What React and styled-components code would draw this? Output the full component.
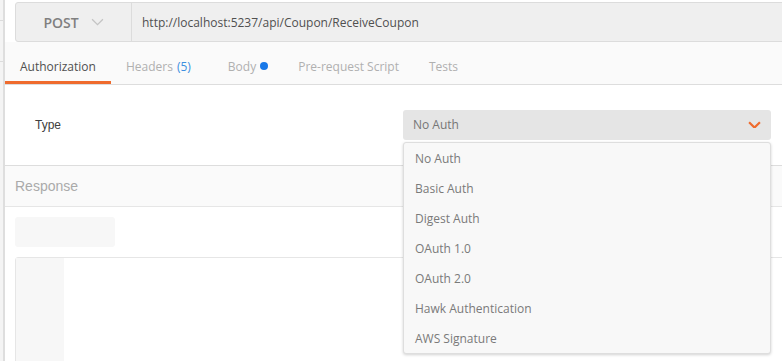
import React from "react";
import styled, { createGlobalStyle } from "styled-components";

const GlobalStyle = createGlobalStyle`
  html, body {
    margin: 0;
    padding: 0;
    background: #ffffff;
    overflow: hidden;
  }
  body {
    font-family: "Open Sans", "Liberation Sans", sans-serif;
    font-size: 12px;
    color: #505050;
  }
`;

const Shell = styled.div`
  display: flex;
  width: 782px;
  height: 361px;
  overflow: hidden;
`;

const Sidebar = styled.div`
  width: 3px;
  flex: none;
  background: #f4f4f4;
  border-right: 2px solid #dedede;
  display: flex;
  flex-direction: column;
`;

const SidebarRow = styled.div`
  height: ${p => p.h}px;
  flex: none;
  border-bottom: 1px solid #dcdcdc;
`;

const Main = styled.div`
  flex: 1;
  min-width: 0;
  display: flex;
  flex-direction: column;
  position: relative;
  & > * {
    flex-shrink: 0;
  }
`;

const UrlBar = styled.div`
  display: flex;
  height: 38px;
  margin: 2px -20px 0 10px;
  background: #efefef;
  border: 1px solid #dcdcdc;
  border-radius: 3px;
`;

const Method = styled.div`
  width: 115px;
  flex: none;
  display: flex;
  align-items: center;
  justify-content: center;
  gap: 12px;
  border-right: 1px solid #dcdcdc;
  color: #808080;
  font-size: 14px;
  font-weight: 600;
`;

const Url = styled.div`
  flex: 1;
  display: flex;
  align-items: center;
  padding-left: 10px;
  color: #505050;
  font-size: 12px;
`;

const Tabs = styled.div`
  display: flex;
  align-items: stretch;
  height: 42px;
  background: #fafafa;
  border-bottom: 1px solid #dddddd;
`;

const Tab = styled.div`
  display: flex;
  align-items: center;
  padding: 9px 15px 0;
  margin-right: ${p => p.gap || 0}px;
  font-size: 12px;
  color: ${p => (p.active ? "#505050" : "#b0b0b0")};
  border-bottom: 3px solid ${p => (p.active ? "#ef6b2d" : "transparent")};
`;

const Count = styled.span`
  color: #3d8fe0;
  margin-left: 4px;
`;

const Dot = styled.span`
  width: 8px;
  height: 8px;
  border-radius: 50%;
  background: #1878e8;
  margin-left: 4px;
`;

const TypeRow = styled.div`
  display: flex;
  align-items: center;
  justify-content: space-between;
  height: 80px;
  padding: 0 11px 0 30px;
  border-bottom: 1px solid #dddddd;
`;

const Label = styled.div`
  font-family: "Liberation Sans", Arial, sans-serif;
  font-size: 12px;
  color: #404040;
`;

const Select = styled.div`
  width: 368px;
  height: 30px;
  box-sizing: border-box;
  display: flex;
  align-items: center;
  justify-content: space-between;
  padding: 0 10px;
  background: #e5e5e5;
  border-radius: 3px;
  color: #767676;
  margin-top: -1px;
`;

const ResponseHead = styled.div`
  height: 40px;
  display: flex;
  align-items: center;
  padding-left: 10px;
  background: #fafafa;
  border-bottom: 1px solid #e6e6e6;
  font-family: "Liberation Sans", Arial, sans-serif;
  font-size: 14px;
  color: #aaaaaa;
`;

const ResponseBody = styled.div`
  padding: 10px 0 0 10px;
  display: flex;
  flex-direction: column;
  gap: 10px;
`;

const Placeholder = styled.div`
  width: 100px;
  height: 30px;
  background: #f7f7f7;
  border-radius: 3px;
`;

const Editor = styled.div`
  height: 120px;
  margin-right: -10px;
  border: 1px solid #e6e6e6;
  border-radius: 3px;
  display: flex;
`;

const Gutter = styled.div`
  width: 48px;
  background: #f7f7f7;
`;

const Menu = styled.ul`
  position: absolute;
  top: 142px;
  left: 398px;
  width: 368px;
  box-sizing: border-box;
  margin: 0;
  padding: 0;
  list-style: none;
  background: #f8f8f8;
  border: 1px solid #dedede;
  border-radius: 3px;
  box-shadow: 0 1px 3px rgba(0, 0, 0, 0.18);
`;

const MenuItem = styled.li`
  height: 30px;
  display: flex;
  align-items: center;
  padding-left: 11px;
  color: #7a7a7a;
  font-size: 12px;
`;

const Chevron = ({ color, size = 12, width = 1.3 }) => (
  <svg width={size} height={size * 0.6} viewBox="0 0 12 7" fill="none">
    <path d="M1 1l5 5 5-5" stroke={color} strokeWidth={width} />
  </svg>
);

const authTypes = [
  "No Auth",
  "Basic Auth",
  "Digest Auth",
  "OAuth 1.0",
  "OAuth 2.0",
  "Hawk Authentication",
  "AWS Signature",
];

export default function App() {
  return (
    <>
      <GlobalStyle />
      <Shell>
        <Sidebar>
          <SidebarRow h={20} />
          <SidebarRow h={40} />
        </Sidebar>
        <Main>
          <UrlBar>
            <Method>
              POST
              <Chevron color="#c4c4c4" size={13} width={1.2} />
            </Method>
            <Url>http://localhost:5237/api/Coupon/ReceiveCoupon</Url>
          </UrlBar>
          <Tabs>
            <Tab active>Authorization</Tab>
            <Tab gap={7}>
              Headers<Count>(5)</Count>
            </Tab>
            <Tab>
              Body<Dot />
            </Tab>
            <Tab>Pre-request Script</Tab>
            <Tab>Tests</Tab>
          </Tabs>
          <TypeRow>
            <Label>Type</Label>
            <Select>
              No Auth
              <Chevron color="#ef6b2d" size={13} width={2} />
            </Select>
          </TypeRow>
          <ResponseHead>Response</ResponseHead>
          <ResponseBody>
            <Placeholder />
            <Editor>
              <Gutter />
            </Editor>
          </ResponseBody>
          <Menu>
            {authTypes.map(t => (
              <MenuItem key={t}>{t}</MenuItem>
            ))}
          </Menu>
        </Main>
      </Shell>
    </>
  );
}
